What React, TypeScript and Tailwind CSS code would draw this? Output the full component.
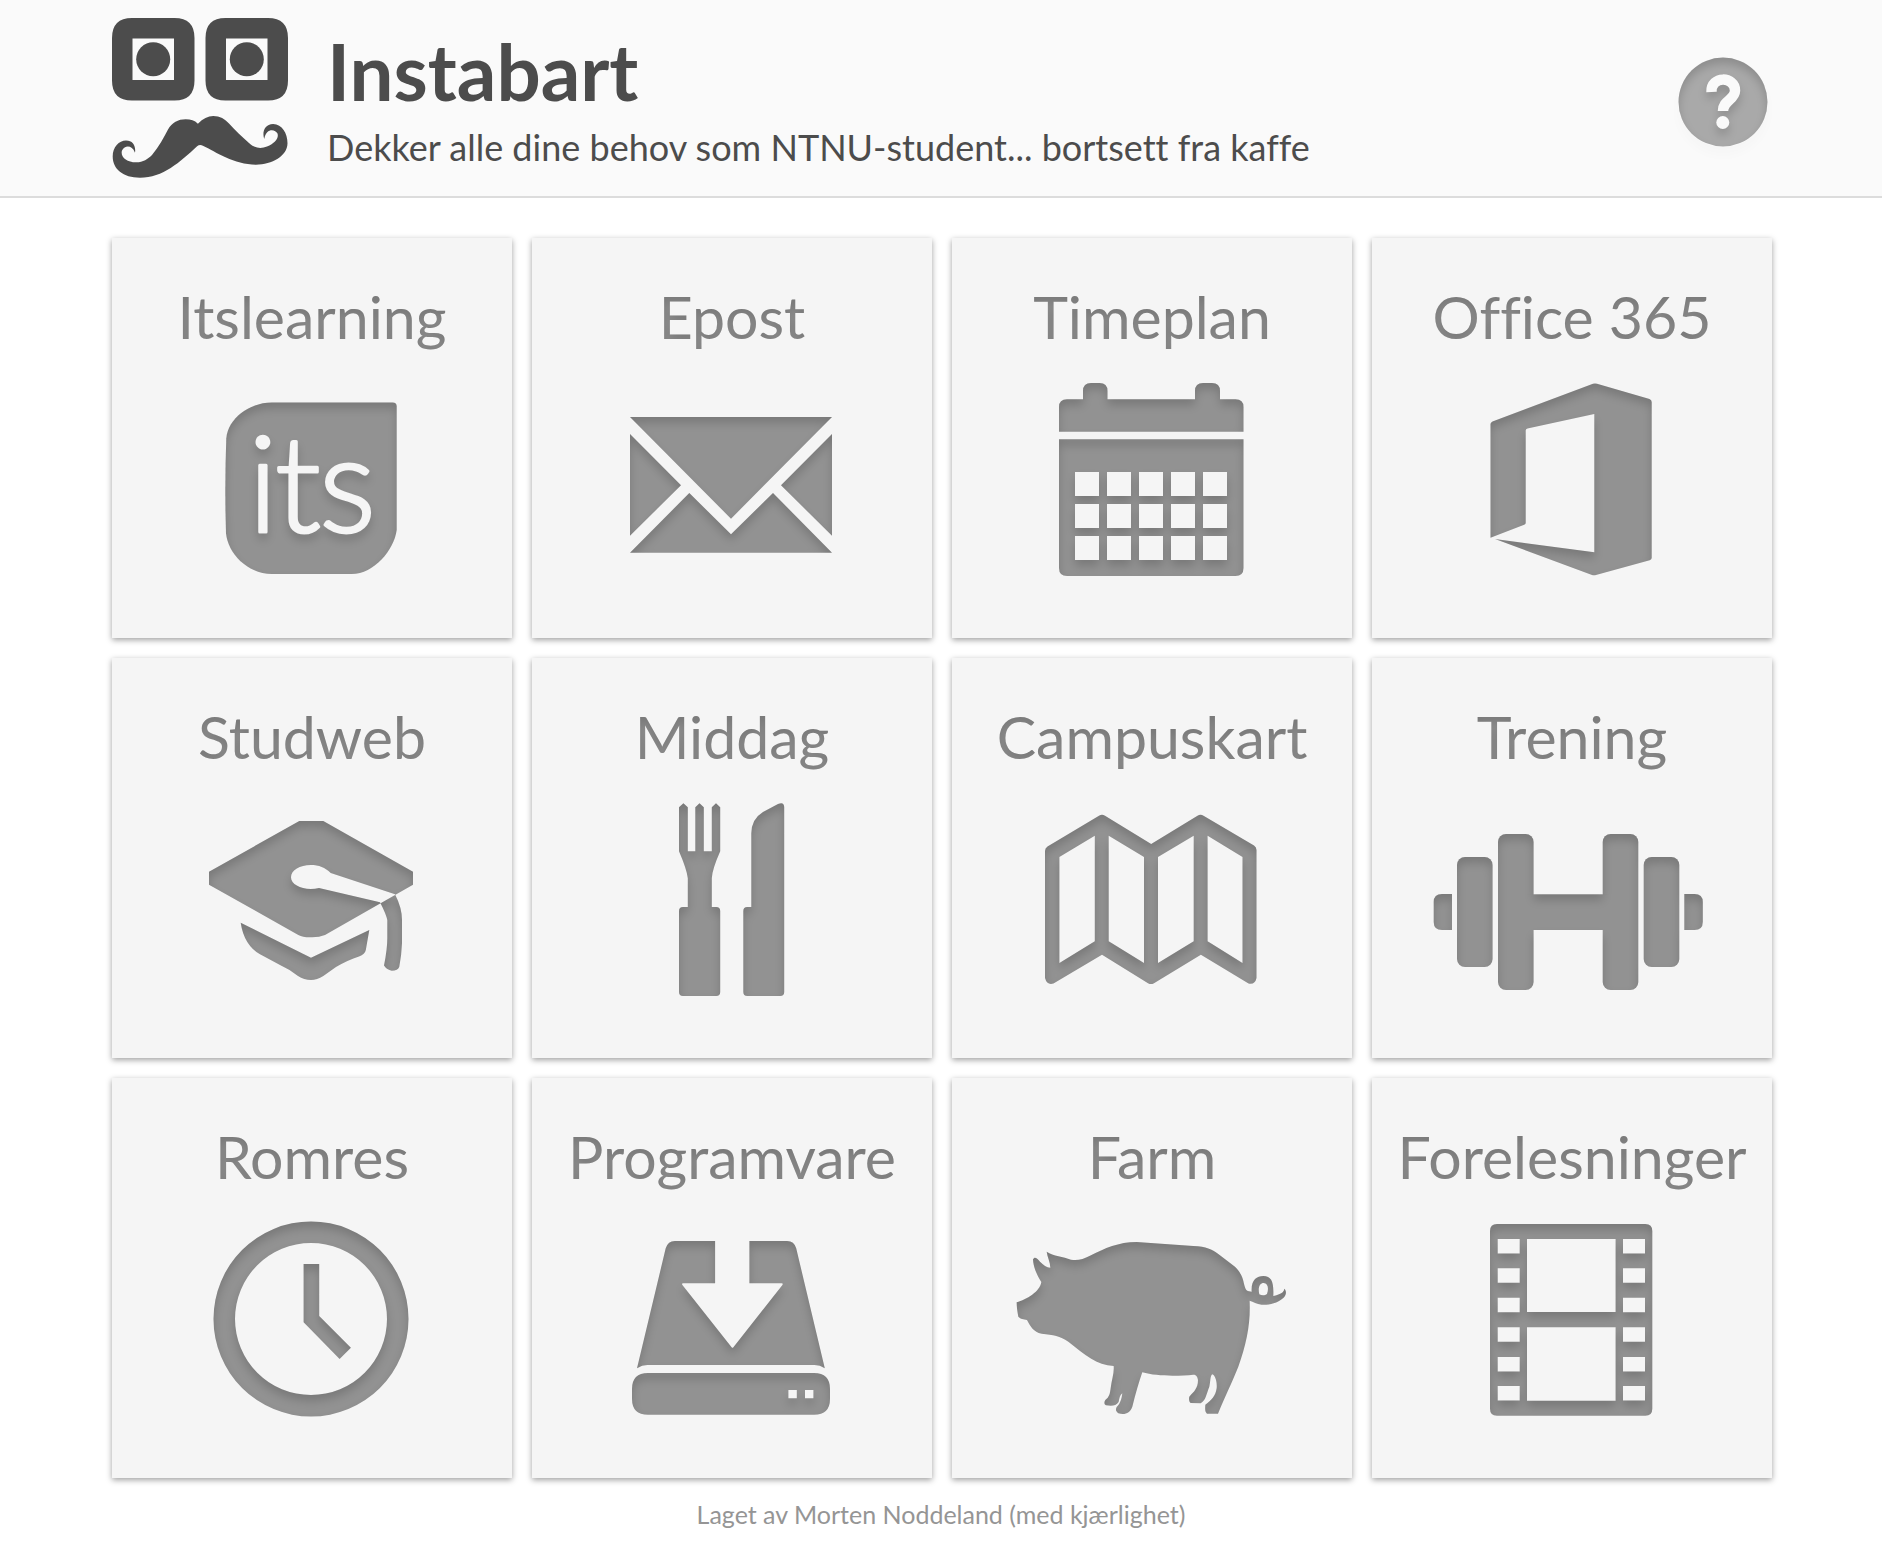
import type { ReactNode } from "react";

type Tile = { title: string; icon: ReactNode };

const calendarColumns = [123, 155, 187, 219, 251];
const calendarRows = [104, 136, 168];
const filmRows = [31, 60.3, 89.7, 119.3, 149, 178];

const box = (x: number, y: number, w: number, h: number) => `M${x} ${y}h${w}v${h}h${-w}z`;

const ItsIcon = (
  <>
    <mask id="its-letters" maskUnits="userSpaceOnUse" x="0" y="0" width="400" height="240">
      <rect width="400" height="240" fill="white" />
      <text
        x="136 163 207"
        y="164"
        fontSize="134"
        fontWeight="300"
        fill="black"
        stroke="black"
        strokeWidth="3"
        strokeLinejoin="round"
        className="font-['Lato',sans-serif]"
      >
        its
      </text>
    </mask>
    <path
      mask="url(#its-letters)"
      d="M114.3 70.3C116 50 138 34.5 159.700 34.5H280.7q4 0 4 4V162C282 182 262 206 239.700 206H159.700C136 206 116 186 114 165.300Q112.500 118 114.300 70.300z"
    />
  </>
);

const MailIcon = (
  <path d="M98 49H300L199 150.7zM98 66L149 117.3L98 167.7zM300 66L249 117.3L300 167.7zM98 184.7L157.3 125L199 166.3L241 125L300 184.7z" />
);

const CalendarIcon = (
  <path
    fillRule="evenodd"
    d={
      "M107 63.7V39q0-7.7 8-7.7H131V23q0-8 8-8h8.500q8 0 8 8v8.300H243V23q0-8 8-8h9q8 0 8 8v8.300h15.500q8 0 8 7.700V63.700z" +
      "M107 71.300H291.500V200q0 8-8 8H115q-8 0-8-8z" +
      calendarRows.flatMap((y) => calendarColumns.map((x) => box(x, y, 24, 24))).join("")
    }
  />
);

const OfficeIcon = (
  <path d="M118.500 56q0-1.500 2-2.500L221 15.800q2-.6 4 0L277.500 31q2.200.8 2.200 3V190q0 1.500-2 2.300L224 207q-2 .6-4 0L123 171L222.300 184.300V46L155.500 60.600q-1.800.5-1.800 2V155q0 1.200-1.500 1.800L118.500 169.700z" />
);

const GraduationIcon = (
  <path
    fillRule="evenodd"
    d="M187.300 33H211.300L301 83.700V96.700L213 147Q207 149.500 199 149.300Q191 149.500 186.300 147L97 96.700V83.700zM179 89.300C179 82 188 77 198.700 77C207 77 213 79.500 218.700 85L283 106.300L268 114.300L207 100Q203 101 198.700 101C188 101 179 96 179 89.300zM128.700 134.700L199 169.700L257.300 142L253.800 162Q253 166 247 168.500Q236 172 224 179L211.300 188Q205 192 199 192Q192 192 186 188Q177 181 168 177L148 166.300Q132 157 128.700 134.700zM268 114.300L283 106.300Q290 120 290 132V155Q289.500 168 287.300 178.700Q286 182.700 279.700 182.700Q275 182 272 177.500Q275.500 160 275.300 148.700V132Q274 126 268 114.300z"
  />
);

const CutleryIcon = (
  <path d="M147 19.300L151.400 15.300L155.800 19.300V63.300H163.300V19.300L167.500 15.300L171.800 19.300V63.300H179.800V19.300L184 15.300L188.200 19.300V63.300Q180 82 179.800 90.300V119H184.200q4 0 4 4V204q0 4-4 4H151q-4 0-4-4V123q0-4 4-4H155.800V90.300Q155 82 147 63.300zM219.300 45.300Q219.500 31 231 24L246 16q6-2.500 6.200 3V204q0 4-4 4H215.300q-4 0-4-4V123q0-4 4-4H219.300z" />
);

const MapIcon = (
  <path
    fillRule="evenodd"
    d="M93 63q0-3 2.500-4.500L147 27.800q3-2.200 6 0L199.200 56L245.500 27.800q3-2.200 6 0L302 57.500q2.500 1.500 2.500 4.500V190q-1.500 7-8 5.500L248.900 166.700L202 195.200q-3 1.800-6 0L150 166.700L101.500 195.500q-6.500 2-8.500-5.500zM107.400 69V175L142.800 153.300V47.700zM156.700 47.700V153.300L192 175V69zM206 69V175L241.700 153.300V47.700zM255.600 47.700V153.300L290.500 175V69z"
  />
);

const DumbbellIcon = (
  <>
    <path d="M80 106V142H70q-8.300 0-8.300-8V114q0-8 8.300-8zM312.300 106V142H322.500q8.300 0 8.300-8V114q0-8-8.300-8z" />
    <rect x="85" y="69" width="35.600" height="110" rx="8" />
    <rect x="271.700" y="69" width="35.600" height="110" rx="8" />
    <rect x="126" y="46" width="35.600" height="156" rx="8" />
    <rect x="230.700" y="46" width="35.600" height="156" rx="8" />
    <rect x="155" y="106.300" width="82" height="35.700" />
  </>
);

const ClockIcon = (
  <path
    fillRule="evenodd"
    d="M101.500 111a97.500 97.500 0 1 1 195 0a97.500 97.500 0 1 1-195 0zM123 111a76 76 0 1 0 152 0a76 76 0 1 0-152 0zM191.600 56H207.200V108L238.900 139.700L227.600 151L191.600 114.300z"
  />
);

const DownloadIcon = (
  <path
    fillRule="evenodd"
    d="M142.800 33H183.100V75.300H151q-1.500 0-.6 1.600L199.600 139.300q.9 1 1.800 0L250.400 76.900q.9-1.600-.6-1.600H217.400V33H255.100q7 0 9.100 7.300L292.800 160.300Q288 157 282.400 157H115.500Q110 157 105 160.300L133.700 40.300Q136 33 142.800 33zM116 165H282q16 0 16 16v9.700q0 16-16 16H116q-16 0-16-16V181q0-16 16-16zM256.400 182v8.300h8.400v-8.300zM273 182v8.300h8.400v-8.300z"
  />
);

const PigIcon = (
  <path
    fillRule="evenodd"
    transform="translate(38 -8) scale(.3333)"
    d="M80 307C110 298 150 275 154 246C140 225 130 200 129 178C135 166 145 178 150 185C160 195 170 203 181 203C181 188 172 170 170 155C190 168 220 170 243 179C265 182 280 177 300 167C345 145 385 126 440 126L610 138C650 139 665 148 685 162L735 200C765 230 758 250 769 270C775 275 780 274 785 275C783 240 800 228 820 228C845 229 852 245 850 288C870 283 882 278 883 266C890 272 890 285 880 294C860 312 835 315 815 314C800 313 790 305 779 302C782 370 770 430 745 500C725 550 705 590 684 641L651 641C645 635 645 628 646 614C665 600 676 590 680 565C682 545 675 525 667 523C660 528 662 545 658 560C648 585 648 600 632 610L602 609C596 604 597 595 598 590C612 575 624 565 624 540C622 528 618 524 610 524C570 528 500 530 457 517C447 545 437 580 427 620C420 640 405 645 385 640C376 633 377 627 380 621C392 610 395 595 397 580C390 585 388 595 386 606C378 618 365 619 348 616C341 612 343 604 346 600C358 592 360 580 362 565C365 540 373 520 371 498C320 495 285 465 235 425C210 408 190 405 155 401C130 396 122 380 111 360C100 357 92 358 85 350C82 335 80 320 80 307zM808 283C803 262 810 249 821 249C834 250 837 265 831 282C825 287 815 287 808 283z"
  />
);

const FilmIcon = (
  <path
    fillRule="evenodd"
    d={
      "M125 16H273.300q7 0 7 7V200.700q0 7-7 7H125q-7 0-7-7V23q0-7 7-7z" +
      box(155, 31, 88.600, 73) +
      box(155, 119.300, 88.600, 73.400) +
      filmRows.map((y) => box(125.700, y, 22, 14.500) + box(251, y, 22, 14.500)).join("")
    }
  />
);

const tiles: Tile[] = [
  { title: "Itslearning", icon: ItsIcon },
  { title: "Epost", icon: MailIcon },
  { title: "Timeplan", icon: CalendarIcon },
  { title: "Office 365", icon: OfficeIcon },
  { title: "Studweb", icon: GraduationIcon },
  { title: "Middag", icon: CutleryIcon },
  { title: "Campuskart", icon: MapIcon },
  { title: "Trening", icon: DumbbellIcon },
  { title: "Romres", icon: ClockIcon },
  { title: "Programvare", icon: DownloadIcon },
  { title: "Farm", icon: PigIcon },
  { title: "Forelesninger", icon: FilmIcon },
];

function InsetFilter() {
  return (
    <svg aria-hidden="true" className="absolute size-0">
      <filter id="inset" x="-20%" y="-30%" width="140%" height="160%" colorInterpolationFilters="sRGB">
        <feComponentTransfer in="SourceAlpha">
          <feFuncA type="table" tableValues="1 0" />
        </feComponentTransfer>
        <feGaussianBlur stdDeviation="5" />
        <feOffset dy="6" />
        <feComposite operator="in" in2="SourceAlpha" />
        <feColorMatrix values="0 0 0 0 0  0 0 0 0 0  0 0 0 0 0  0 0 0 .17 0" result="shade" />
        <feMerge>
          <feMergeNode in="SourceGraphic" />
          <feMergeNode in="shade" />
        </feMerge>
      </filter>
    </svg>
  );
}

function Logo() {
  return (
    <svg viewBox="0 0 176 160" aria-hidden="true" className="h-[160px] w-[176px] shrink-0 fill-[#4c4c4c]">
      <path
        fillRule="evenodd"
        d="M20 0H62.500q20 0 20 20V62.500q0 20-20 20H20q-20 0-20-20V20q0-20 20-20zM20.500 20.500V62H62V20.500zM113.500 0H156q20 0 20 20V62.500q0 20-20 20H113.500q-20 0-20-20V20q0-20 20-20zM114 20.500V62H155.500V20.500z"
      />
      <circle cx="41.200" cy="41.200" r="17" />
      <circle cx="134.800" cy="41.200" r="17" />
      <path d="M85.900 105.700C91 100.500 96 98 101.200 98C108 98 113 101 117 105.500C123 112 130 119 137 125C143 130.500 149 131 155 128.500C163 125 167 120 165.500 115.500C163 111 154 110 152.300 121C150 115 152 106 161.200 106C170 106.500 175.500 115 175.500 125.300C175.500 138 160 146.700 144 146.700C122 146.700 104 134 90.900 127.800Q88 126 85.100 128.200C68 144 51 159.700 28 159.700C11 159.700.7 151 .7 138.500C.7 129 7 122.500 14 122.500C21 122.500 24 128 23 134.700C20 127 13 127 10 132.500C8 139 15 144.500 24.400 144.300C31 144.300 36 141 40 137C47 128.500 52 119 56 111.500C60 104.500 66 101.300 73.700 101.300C79 101.300 82.500 102.500 85.900 105.700z" />
    </svg>
  );
}

function HelpIcon() {
  return (
    <svg viewBox="0 0 90 90" aria-hidden="true" className="size-[90px]">
      <mask id="help-cut">
        <rect width="90" height="90" fill="white" />
        <path d="M33.500 35C32.500 18.500 57 19 57 33.500C57 43 45 43 45 54" fill="none" stroke="black" strokeWidth="10.500" />
        <circle cx="44.800" cy="65.500" r="6.500" fill="black" />
      </mask>
      <g filter="url(#inset)">
        <circle cx="45" cy="45" r="44.500" fill="#a9a9a9" mask="url(#help-cut)" />
      </g>
    </svg>
  );
}

export default function App() {
  return (
    <div className="bg-white font-['Lato',sans-serif] [font-variant-ligatures:none]">
      <InsetFilter />
      <header className="flex items-start border-b-2 border-[#dcdcdc] bg-[#fafafa] pt-[18px] pr-[110px] pb-[18px] pl-28 text-[#4c4c4c]">
        <Logo />
        <div className="ml-[39px] flex flex-col pt-1">
          <h1 className="text-[78px] leading-[98px] font-bold">Instabart</h1>
          <p className="text-[36px] leading-[54px]">Dekker alle dine behov som NTNU-student... bortsett fra kaffe</p>
        </div>
        <button type="button" aria-label="Hjelp" className="mt-[39px] mr-1 ml-auto cursor-pointer rounded-full shadow-[0_8px_12px_rgba(0,0,0,0.02)]">
          <HelpIcon />
        </button>
      </header>
      <main className="grid grid-cols-4 gap-5 pt-10 pr-[110px] pl-28">
        {tiles.map(({ title, icon }) => (
          <a
            key={title}
            href={`#${title}`}
            className="flex aspect-square flex-col items-center justify-between bg-[#f5f5f5] pt-[43px] pb-[30px] text-[#929292] shadow-[0_2px_6px_rgba(0,0,0,0.38)]"
          >
            <h2 className="w-full text-center text-[59px] leading-[72px] whitespace-nowrap [filter:url(#inset)]">{title}</h2>
            <svg viewBox="0 0 400 240" aria-hidden="true" className="h-[240px] w-full fill-current">
              <g filter="url(#inset)">{icon}</g>
            </svg>
          </a>
        ))}
      </main>
      <footer className="pt-[18px] pb-4 text-center text-[25px] leading-9 text-[#959595]">Laget av Morten Noddeland (med kjærlighet)</footer>
    </div>
  );
}
